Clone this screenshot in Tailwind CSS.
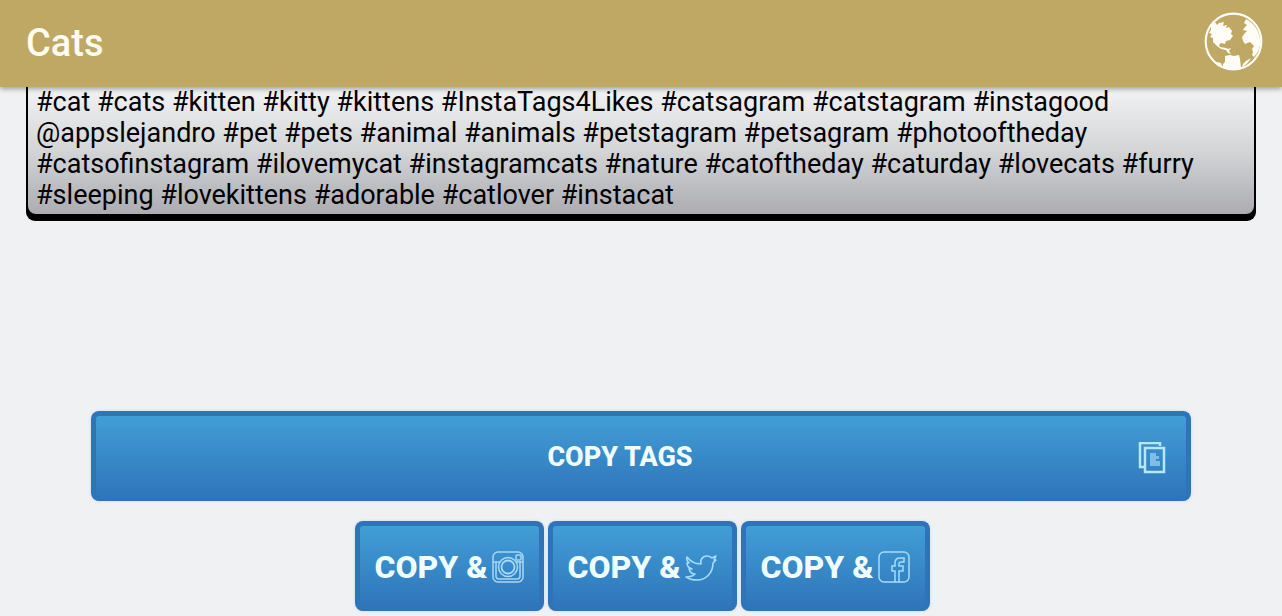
<!DOCTYPE html>
<html lang="en">
<head>
<meta charset="utf-8">
<meta name="viewport" content="width=device-width, initial-scale=1">
<title>Cats</title>
<script src="https://cdn.jsdelivr.net/npm/@tailwindcss/browser@4"></script>
</head>
<body class="flex min-h-screen flex-col bg-[#eff1f3] font-[Roboto,sans-serif]">
<header class="relative z-10 flex h-[87px] items-center justify-between bg-[#bfa764] pr-[18px] pb-[2px] pl-[26px] shadow-[0_2px_5px_rgba(0,0,0,0.35)]">
  <h1 class="text-[38px] leading-[44px] font-medium text-[#fffdf0]">Cats</h1>
  <button type="button" aria-label="Language">
    <svg class="size-[61px]" viewBox="0 0 61 61" fill="#fffdf5">
      <circle cx="30.500" cy="29.500" r="27.800" fill="none" stroke="#fffdf5" stroke-width="2.200"/>
      <path d="M8 13L12 10L14 13L16 11L21 10L20 14L24 13L23 16L26 15L29 19L28 22L30 24L27 28L23 29L22 32L18 31L16 33L17 35L23 36L25 37L28 36L26 39L28 42L25 41L23 38L18 37L14 34L10 30L10 26L7 25L9 22L6 21L8 18Z"/>
      <path d="M22 44L27 43L31 44L36 43L37 47L38 56C33 59 26 58 20 56L20 52L22 50Z"/>
      <path d="M14 50L18 51L20 56C17 55 15 53 13 51ZM43 49L48 46C46 50 43 53 39 55L40 52Z"/>
      <path d="M43 7C51 11 57 20 57 28C58 34 55 41 51 45L49 43L50 40L49 37L51 34L47 30L42 32L40 29L39 25L42 21L44 19L40 18L42 15L44 13L41 11Z"/>
    </svg>
  </button>
</header>
<main class="flex flex-1 flex-col px-[26px]">
  <div class="rounded-b-[9px] bg-black px-[2px] pb-[7px]">
    <p class="rounded-b-lg bg-linear-to-b from-[#f2f3f5] via-[#d3d5d7] to-[#acacb1] px-2 pb-[3px] text-[27px] leading-[31px] text-black">#cat #cats #kitten #kitty #kittens #InstaTags4Likes #catsagram #catstagram #instagood @appslejandro #pet #pets #animal #animals #petstagram #petsagram #photooftheday #catsofinstagram #ilovemycat #instagramcats #nature #catoftheday #caturday #lovecats #furry #sleeping #lovekittens #adorable #catlover #instacat</p>
  </div>
  <div class="mt-auto flex flex-col items-center gap-5 pb-[5px]">
    <div class="w-full px-[65px]">
      <button type="button" class="flex h-[90px] w-full items-center rounded-lg border-[5px] border-b-0 border-[#2f74b8] bg-linear-to-b from-[#429ed6] to-[#2e73b9] pr-[18px] pb-[2px] pl-2 text-[27px] font-extrabold text-[#f0ffff] shadow-[0_0_3px_rgba(130,180,230,0.4)]">
        <span class="flex-1 text-center">COPY TAGS</span>
        <svg class="size-8" viewBox="0 2 32 32" fill="none" stroke="#b5e8ff" stroke-width="2.500" aria-hidden="true">
          <path d="M24 6V3H4V27H8"/><rect x="9" y="8" width="19" height="24"/>
          <path d="M14 13H20V16H23V19H20V21H24V26H14Z" fill="#7dbde8" stroke="none"/>
        </svg>
      </button>
    </div>
    <div class="flex gap-1 pl-[2px]">
      <button type="button" class="flex h-[90px] w-[189px] items-center justify-center gap-1 rounded-lg border-[5px] border-b-0 border-[#2f74b8] bg-linear-to-b from-[#429ed6] to-[#2e73b9] pb-1 text-[32px] font-extrabold whitespace-nowrap text-[#f0ffff] shadow-[0_0_3px_rgba(130,180,230,0.4)]" aria-label="Copy and open Instagram">
        <span>COPY &amp;</span>
        <svg class="size-8 shrink-0" viewBox="0 0 32 32" fill="none" stroke="#a5d9f7" stroke-width="1.500" aria-hidden="true">
          <rect x="1" y="1" width="30" height="30" rx="5"/><path d="M1 11H8M24 11H31M4 11V25Q4 28 7 28H25Q28 28 28 25V11"/><circle cx="16" cy="16" r="9.500"/><circle cx="16" cy="16" r="6.500" stroke-width="1.800"/><rect x="24" y="4" width="5" height="5" rx="1"/>
        </svg>
      </button>
      <button type="button" class="flex h-[90px] w-[189px] items-center justify-center gap-1 rounded-lg border-[5px] border-b-0 border-[#2f74b8] bg-linear-to-b from-[#429ed6] to-[#2e73b9] pb-1 text-[32px] font-extrabold whitespace-nowrap text-[#f0ffff] shadow-[0_0_3px_rgba(130,180,230,0.4)]" aria-label="Copy and open Twitter">
        <span>COPY &amp;</span>
        <svg class="size-8 shrink-0" viewBox="0 0 32 32" fill="none" stroke="#a5dcfa" stroke-width="1.600" stroke-linejoin="round" aria-hidden="true">
          <path d="M2 6C5 10 10 13 16 13C15 8 18 5 22 5C24 5 26 6 27 7L31 5L29 9L31 9L28 12C28 22 21 29 12 29C8 29 4 28 1 26C5 26 8 25 10 23C7 23 5 21 4 18H7C4 17 2 15 2 12L4 12C2 10 1 8 2 6Z"/>
        </svg>
      </button>
      <button type="button" class="flex h-[90px] w-[189px] items-center justify-center gap-1 rounded-lg border-[5px] border-b-0 border-[#2f74b8] bg-linear-to-b from-[#429ed6] to-[#2e73b9] pb-1 text-[32px] font-extrabold whitespace-nowrap text-[#f0ffff] shadow-[0_0_3px_rgba(130,180,230,0.4)]" aria-label="Copy and open Facebook">
        <span>COPY &amp;</span>
        <svg class="size-8 shrink-0" viewBox="0 0 32 32" fill="none" stroke="#a5dcfa" stroke-width="1.500" aria-hidden="true">
          <rect x="1" y="1" width="30" height="30" rx="5"/><path d="M17 31V20H14V15H17V12Q17 7 22 7H26V11H23Q21 11 21 13V15H25V20H21V31"/>
        </svg>
      </button>
    </div>
  </div>
</main>
</body>
</html>
